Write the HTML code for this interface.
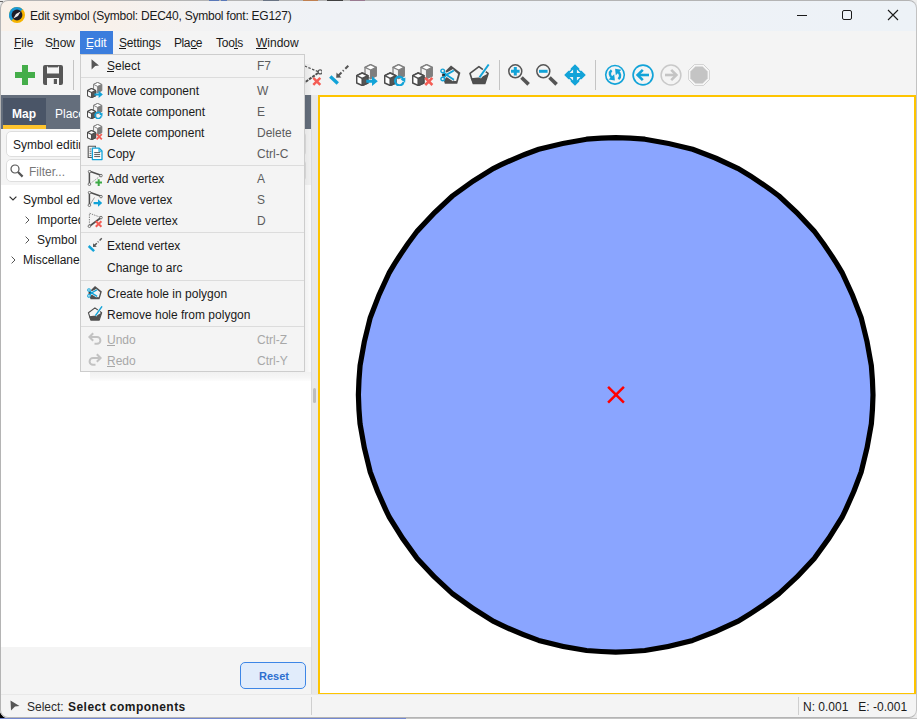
<!DOCTYPE html>
<html><head><meta charset="utf-8">
<style>
*{box-sizing:border-box;margin:0;padding:0}
html,body{width:917px;height:719px;overflow:hidden;background:#ececec;font-family:"Liberation Sans",sans-serif;font-size:12px;color:#1a1a1a}
.a{position:absolute}
svg.a{overflow:visible}
#win{position:absolute;left:0;top:0;width:917px;height:718px;background:#f4f4f4;border-radius:8px;overflow:hidden}
#wborder{position:absolute;left:0;top:0;width:917px;height:718px;border:1px solid #b4b4b4;border-right-color:#c2c2c2;border-radius:8px;pointer-events:none}
#title{position:absolute;left:0;top:0;width:917px;height:31px;background:linear-gradient(90deg,#f9f1e9 0%,#f8f1eb 12%,#f2f2f3 22%,#eff2f6 35%,#edf2f7 100%)}
.t{position:absolute;white-space:nowrap;line-height:12px;height:12px}
.ul{position:absolute;height:1px;background:#1a1a1a}
#menubar .t{top:37px}
#tabbar{left:1px;top:95px;width:310px;height:34px;background:#646e7c}
#maptab{left:3px;top:98px;width:43px;height:27px;background:#4a5567}
#mapline{left:3px;top:125px;width:43px;height:4px;background:#fec42e}
#splitter{left:311px;top:95px;width:7px;height:599px;background:#e8e8e8;border-left:1px solid #dcdcdc}
#map{left:318px;top:95px;width:598px;height:600px;border:2px solid #fec400;background:#fff}
#tree{left:1px;top:185px;width:310px;height:462px;background:#fff}
#status{left:0;top:694px;width:917px;height:24px;border-top:1px solid #e8e8e8;background:#f4f4f4}
#menu{left:80px;top:54px;width:225px;height:318px;background:#f4f4f4;border:1px solid #cdcdcd;}
#menu .t{left:26px}
#menu .k{left:176px;color:#5c5c5c}
#menu svg{position:absolute;left:6px;width:16px;height:16px}
.tb{position:absolute;top:64px;width:22px;height:22px}
.sep{position:absolute;left:0;width:223px;height:1px;background:#dcdcdc}
.dis,#menu .dis{color:#a8a8a8}
</style></head><body>
<svg width="0" height="0" style="position:absolute">
<defs>
  <symbol id="cubes" viewBox="0 0 22 22">
    <g stroke-linejoin="round" stroke-width="1.3">
      <path d="M14.6 0.6L20.2 3.3V11.8L14.6 14.5L9 11.8V3.3Z" fill="#f2f2f2" stroke="#808080"/>
      <path d="M14.6 6V14.5L20.2 11.8V3.3Z" fill="#7e7e7e" stroke="#808080"/>
      <path d="M9 3.3L14.6 6L20.2 3.3L14.6 0.6Z" fill="#fff" stroke="#808080"/>
      <path d="M6.2 9L11.8 11.7V19L6.2 21.5L0.7 19V11.7Z" fill="#fff" stroke="#4d4d4d" stroke-width="1.5"/>
      <path d="M6.2 14.4V21.5L11.8 19V11.7Z" fill="#555" stroke="#4d4d4d" stroke-width="1.5"/>
      <path d="M0.7 11.7L6.2 14.4L11.8 11.7L6.2 9Z" fill="#fff" stroke="#4d4d4d" stroke-width="1.5"/>
    </g>
  </symbol>
  <symbol id="i-move" viewBox="0 0 22 22">
    <use href="#cubes"/>
    <path d="M10.3 15.7H16V12.2L21.8 17.2L16 22V18.7H10.3Z" fill="#12a3d8"/>
  </symbol>
  <symbol id="i-rot" viewBox="0 0 22 22">
    <use href="#cubes"/>
    <path d="M19.3 15.2A4.3 4.3 0 1 0 19.6 18" fill="none" stroke="#12a3d8" stroke-width="2.2"/>
    <path d="M16.6 15.6L21.4 13.4L21.2 18.4Z" fill="#12a3d8"/>
  </symbol>
  <symbol id="i-del" viewBox="0 0 22 22">
    <use href="#cubes"/>
    <path d="M13.2 13.8L20.4 21M20.4 13.8L13.2 21" stroke="#f45d55" stroke-width="2.5"/>
  </symbol>
  <symbol id="i-extend" viewBox="0 0 22 22">
    <path d="M2.3 12.4L9.8 19.4" stroke="#12a3d8" stroke-width="3.4"/>
    <path d="M20.3 1.7L17.3 4.7M15.7 6.3L14.9 7.1M13.5 8.5L10.2 11.8" stroke="#555" stroke-width="2"/>
    <path d="M8.2 13.8L8.5 8.6L13.4 13.5Z" fill="#555"/>
  </symbol>
  <symbol id="i-hole" viewBox="0 0 22 22">
    <path d="M11 1.4L20.4 8.8L17.2 19.7H4.9L1.8 10.7Z" fill="#4f4f4f"/>
    <path d="M6.5 10.8L14 6.6L18.1 10L16.2 17H14.5Z" fill="#f4f4f4"/>
    <path d="M6.3 10.8L13.9 6.5M6.3 10.8L13.9 15.7M2.7 6.9L6.3 10.8L2.7 15" stroke="#f4f4f4" stroke-width="3.4"/>
    <path d="M6.3 10.8L13.9 6.5M6.3 10.8L13.9 15.7M3.5 7.8L6.3 10.8L3.5 14.1" stroke="#12a3d8" stroke-width="1.9"/>
    <circle cx="2.7" cy="6.9" r="1.8" fill="#f4f4f4" stroke="#12a3d8" stroke-width="1.4"/>
    <circle cx="2.7" cy="15" r="1.8" fill="#f4f4f4" stroke="#12a3d8" stroke-width="1.4"/>
  </symbol>
  <symbol id="i-unhole" viewBox="0 0 22 22">
    <path d="M10.9 2.6L20.1 9.4L16.8 19.4H5.3L2 9.4Z" fill="#f4f4f4" stroke="#4f4f4f" stroke-width="1.6" stroke-linejoin="round"/>
    <path d="M2.6 14.2L13 13.2L20.1 9.4L16.8 19.4H5.3Z" fill="#4f4f4f"/>
    <path d="M20.7 0.5L11.5 13.4" stroke="#f4f4f4" stroke-width="3.6"/>
    <path d="M20.7 0.5L11.5 13.4" stroke="#12a3d8" stroke-width="1.9"/>
  </symbol>
  <symbol id="i-zin" viewBox="0 0 22 22">
    <circle cx="7.3" cy="7.3" r="6.5" fill="none" stroke="#555" stroke-width="1.5"/>
    <path d="M13.5 13.5L20.6 20.4" stroke="#555" stroke-width="3.6"/>
    <path d="M7.3 3V11.6M3 7.3H11.6" stroke="#12a3d8" stroke-width="3"/>
  </symbol>
  <symbol id="i-zout" viewBox="0 0 22 22">
    <circle cx="7.3" cy="7.3" r="6.5" fill="none" stroke="#555" stroke-width="1.5"/>
    <path d="M13.5 13.5L20.6 20.4" stroke="#555" stroke-width="3.6"/>
    <path d="M3 7.3H11.6" stroke="#12a3d8" stroke-width="3"/>
  </symbol>
  <symbol id="i-pan" viewBox="0 0 22 22">
    <path d="M11 0.2L15.3 4.5V5.8L16.2 6.7H17.5L21.8 11L17.5 15.3H16.2L15.3 16.2V17.5L11 21.8L6.7 17.5V16.2L5.8 15.3H4.5L0.2 11L4.5 6.7H5.8L6.7 5.8V4.5Z" fill="#12a3d8"/>
    <path d="M9.1 5.6V9.1H5.6ZM12.9 5.6V9.1H16.4ZM9.1 16.4V12.9H5.6ZM12.9 16.4V12.9H16.4Z" fill="#f4f4f4"/>
  </symbol>
  <symbol id="i-refresh" viewBox="0 0 22 22">
    <circle cx="11" cy="10.8" r="9.3" fill="none" stroke="#12a3d8" stroke-width="1.6"/>
    <path d="M7.6 6.3C4.8 8.6 5.6 12.4 8.6 14" fill="none" stroke="#12a3d8" stroke-width="2.4"/>
    <path d="M10.9 16.6L4.6 15.6L10.2 10.2Z" fill="#12a3d8"/>
    <path d="M14.4 15.1C17.2 12.8 16.4 9 13.4 7.4" fill="none" stroke="#12a3d8" stroke-width="2.4"/>
    <path d="M11.1 4.8L17.4 5.8L11.8 11.2Z" fill="#12a3d8"/>
  </symbol>
  <symbol id="i-back" viewBox="0 0 22 22">
    <circle cx="11" cy="11" r="9.9" fill="none" stroke="#12a3d8" stroke-width="1.7"/>
    <path d="M17 11H7" stroke="#12a3d8" stroke-width="2.6"/>
    <path d="M10.8 5.8L5.6 11L10.8 16.2" fill="none" stroke="#12a3d8" stroke-width="2.6"/>
  </symbol>
  <symbol id="i-fwd" viewBox="0 0 22 22">
    <circle cx="11" cy="11" r="9.9" fill="none" stroke="#c9c9c9" stroke-width="1.5"/>
    <path d="M5 11H15" stroke="#c4c4c4" stroke-width="2.6"/>
    <path d="M11.2 5.8L16.4 11L11.2 16.2" fill="none" stroke="#c4c4c4" stroke-width="2.6"/>
  </symbol>
  <symbol id="i-stop" viewBox="0 0 22 22">
    <path d="M6.6 0.4H15.4L21.6 6.6V15.4L15.4 21.6H6.6L0.4 15.4V6.6Z" fill="#f6f6f6" stroke="#cdcdcd" stroke-width="0.9"/>
    <path d="M7.4 2.4H14.6L19.6 7.4V14.6L14.6 19.6H7.4L2.4 14.6V7.4Z" fill="#c4c4c4"/>
  </symbol>
  <symbol id="i-addv" viewBox="0 0 16 16">
    <path d="M2.6 1.3L14 5.3M2.4 2.2V13.6" stroke="#4f4f4f" stroke-width="1.5"/>
    <path d="M2.8 14L13.5 5.8" stroke="#777" stroke-width="0.8" stroke-dasharray="1.3 1"/>
    <circle cx="2.6" cy="1.6" r="1.3" fill="#f4f4f4" stroke="#666" stroke-width="0.9"/>
    <circle cx="14" cy="5.6" r="1.3" fill="#f4f4f4" stroke="#666" stroke-width="0.9"/>
    <circle cx="2.4" cy="14.2" r="1.3" fill="#f4f4f4" stroke="#666" stroke-width="0.9"/>
    <path d="M11.7 9.3V15.9M8.4 12.6H15" stroke="#3ba945" stroke-width="2"/>
  </symbol>
  <symbol id="i-movev" viewBox="0 0 16 16">
    <path d="M2.6 1.3L14 5.3M2.4 2.2V13.6" stroke="#4f4f4f" stroke-width="1.5"/>
    <path d="M2.8 14L7.5 6.5" stroke="#888" stroke-width="0.8"/>
    <circle cx="2.6" cy="1.6" r="1.3" fill="#f4f4f4" stroke="#666" stroke-width="0.9"/>
    <circle cx="14" cy="5.6" r="1.3" fill="#f4f4f4" stroke="#666" stroke-width="0.9"/>
    <circle cx="2.4" cy="14.2" r="1.3" fill="#f4f4f4" stroke="#666" stroke-width="0.9"/>
    <path d="M6.6 11H11V8.2L15.2 12L11 15.8V13.2H6.6Z" fill="#12a3d8"/>
  </symbol>
  <symbol id="i-delv" viewBox="0 0 16 16">
    <path d="M2.6 1.3L13.5 5.3M2.4 2.2V13.6" stroke="#777" stroke-width="0.9" stroke-dasharray="1.4 1"/>
    <path d="M2.8 14L13.5 6" stroke="#4f4f4f" stroke-width="1.6"/>
    <circle cx="14" cy="5.6" r="1.3" fill="#f4f4f4" stroke="#666" stroke-width="0.9"/>
    <circle cx="2.4" cy="14.2" r="1.3" fill="#f4f4f4" stroke="#666" stroke-width="0.9"/>
    <path d="M8.8 9.2L14.4 14.8M14.4 9.2L8.8 14.8" stroke="#f45d55" stroke-width="2"/>
  </symbol>
  <symbol id="i-copy" viewBox="0 0 16 16">
    <path d="M1.2 1.2H8.4V2.8M1.2 1.2V12.5H5" fill="none" stroke="#555" stroke-width="1.1"/>
    <path d="M2.6 4H4.4M2.6 6.2H4.4M2.6 8.4H4.4M2.6 10.6H4.4" stroke="#555" stroke-width="0.9"/>
    <path d="M5.4 3.2H12.2L15 6V14.6H5.4Z" fill="#fff" stroke="#12a3d8" stroke-width="1.3" stroke-linejoin="round"/>
    <path d="M12 3.4V6.2H14.8" fill="none" stroke="#12a3d8" stroke-width="1.1"/>
    <path d="M7.2 7.6H13.2M7.2 9.6H13.2M7.2 11.6H13.2" stroke="#555" stroke-width="1"/>
  </symbol>
  <symbol id="i-undo" viewBox="0 0 16 16">
    <path d="M3.5 6H10A3.4 3.4 0 0 1 10 12.8H7.5" fill="none" stroke="#c2c2c2" stroke-width="2"/>
    <path d="M6.2 2.2L2.4 6L6.2 9.8" fill="none" stroke="#c2c2c2" stroke-width="2"/>
  </symbol>
  <symbol id="i-redo" viewBox="0 0 16 16">
    <path d="M12.5 6H6A3.4 3.4 0 0 0 6 12.8H8.5" fill="none" stroke="#c2c2c2" stroke-width="2"/>
    <path d="M9.8 2.2L13.6 6L9.8 9.8" fill="none" stroke="#c2c2c2" stroke-width="2"/>
  </symbol>
</defs>
</svg>
<div class="a" style="left:0;top:700px;width:12px;height:19px;background:#000"></div>
<div class="a" style="left:0;top:718px;width:406px;height:1px;background:#7488d0"></div>
<div class="a" style="left:406px;top:718px;width:511px;height:1px;background:#c4c4c4"></div>
<div class="a" style="left:0;top:1px;width:3px;height:1px;background:#666"></div>
<div id="win">
  <div id="title">
    <svg class="a" style="left:9px;top:7px" width="16" height="16" viewBox="0 0 16 16">
      <circle cx="8" cy="8" r="8" fill="#f6b400"/>
      <path d="M8 0A8 8 0 0 0 2.34 13.66L13.66 2.34A8 8 0 0 0 8 0Z" fill="#1a9ad6"/>
      <circle cx="8" cy="8" r="5.4" fill="#1e1e28"/>
      <path d="M11.6 4.4L9 9L4.4 11.6L7 7Z" fill="#ececec"/>
    </svg>
    <div class="t" style="left:30px;top:10px;letter-spacing:-0.24px">Edit symbol (Symbol: DEC40, Symbol font: EG127)</div>
    <div class="a" style="left:797px;top:15px;width:10px;height:1px;background:#1a1a1a"></div>
    <div class="a" style="left:842px;top:10px;width:10px;height:10px;border:1px solid #1a1a1a;border-radius:2px"></div>
    <svg class="a" style="left:887px;top:9px" width="12" height="12" viewBox="0 0 12 12"><path d="M1 1L11 11M11 1L1 11" stroke="#1a1a1a" stroke-width="1.1"/></svg>
  </div>

  <div id="menubar">
    <div class="a" style="left:80px;top:31px;width:33px;height:23px;background:#3b7ddd"></div>
    <div class="t" style="left:14px">File</div>
    <div class="ul" style="left:14px;top:48px;width:7px"></div>
    <div class="t" style="left:45px">Show</div>
    <div class="ul" style="left:52px;top:48px;width:7px"></div>
    <div class="t" style="left:86px;color:#fff">Edit</div>
    <div class="ul" style="left:86px;top:48px;width:7px;background:#fff"></div>
    <div class="t" style="left:119px;letter-spacing:-0.2px">Settings</div>
    <div class="ul" style="left:119px;top:48px;width:7px"></div>
    <div class="t" style="left:174px;letter-spacing:-0.4px">Place</div>
    <div class="ul" style="left:191px;top:48px;width:6px"></div>
    <div class="t" style="left:216px;letter-spacing:-0.2px">Tools</div>
    <div class="ul" style="left:234px;top:48px;width:4px"></div>
    <div class="t" style="left:256px">Window</div>
    <div class="ul" style="left:256px;top:48px;width:11px"></div>
  </div>

  <div id="toolbar">
    <svg class="a" style="left:15px;top:65px" width="20" height="20" viewBox="0 0 20 20"><path d="M7 0H13V7H20V13H13V20H7V13H0V7H7Z" fill="#44ad4a"/></svg>
    <svg class="a" style="left:43px;top:65px" width="20" height="20" viewBox="0 0 20 20"><path d="M2 0H18A2 2 0 0 1 20 2V18A2 2 0 0 1 18 20H2A2 2 0 0 1 0 18V2A2 2 0 0 1 2 0Z M4 1.5V8.5H16V1.5Z M4 13V20H16V13Z" fill="#575757" fill-rule="evenodd"/><rect x="10.8" y="14" width="3.2" height="5" fill="#575757"/><rect x="5" y="1" width="10" height="1.4" fill="#575757"/></svg>
    <div class="a" style="left:73px;top:60px;width:1px;height:30px;background:#c4c4c4"></div>
    <svg class="tb" style="left:300px"><path d="M1 0.5L18.5 7.8" stroke="#555" stroke-width="1.2" stroke-dasharray="2.5 1.5"/><path d="M18 9L4 19" stroke="#4f4f4f" stroke-width="2" stroke-dasharray="3 1"/><circle cx="20.2" cy="7.9" r="2" fill="#f4f4f4" stroke="#555" stroke-width="1.1"/><path d="M13.3 13.9L20.3 20.9M20.3 13.9L13.3 20.9" stroke="#f45d55" stroke-width="2.5"/></svg>
    <svg class="tb" style="left:328px"><use href="#i-extend"/></svg>
    <svg class="tb" style="left:356px"><use href="#i-move"/></svg>
    <svg class="tb" style="left:384px"><use href="#i-rot"/></svg>
    <svg class="tb" style="left:412px"><use href="#i-del"/></svg>
    <svg class="tb" style="left:440px"><use href="#i-hole"/></svg>
    <svg class="tb" style="left:468px"><use href="#i-unhole"/></svg>
    <div class="a" style="left:499px;top:60px;width:1px;height:30px;background:#c4c4c4"></div>
    <svg class="tb" style="left:508px"><use href="#i-zin"/></svg>
    <svg class="tb" style="left:536px"><use href="#i-zout"/></svg>
    <svg class="tb" style="left:564px"><use href="#i-pan"/></svg>
    <div class="a" style="left:595px;top:60px;width:1px;height:30px;background:#c4c4c4"></div>
    <svg class="tb" style="left:604px"><use href="#i-refresh"/></svg>
    <svg class="tb" style="left:632px"><use href="#i-back"/></svg>
    <svg class="tb" style="left:660px"><use href="#i-fwd"/></svg>
    <svg class="tb" style="left:688px"><use href="#i-stop"/></svg>
  </div>

  <div class="a" id="tabbar"></div>
  <div class="a" id="maptab"></div>
  <div class="a" id="mapline"></div>
  <div class="t" style="left:12px;top:108px;color:#fff;font-weight:bold">Map</div>
  <div class="t" style="left:55px;top:108px;color:#fff">Place</div>

  <div class="a" style="left:6px;top:131px;width:300px;height:26px;background:#fff;border:1px solid #dedede;border-radius:5px"></div>
  <div class="t" style="left:13px;top:139px">Symbol editing</div>
  <div class="a" style="left:6px;top:159px;width:300px;height:23px;background:#fff;border:1px solid #dedede;border-radius:5px"></div>
  <svg class="a" style="left:10px;top:164px" width="14" height="14" viewBox="0 0 14 14"><circle cx="5" cy="5" r="4" fill="none" stroke="#555" stroke-width="1.2"/><path d="M8 8L12.6 12.6" stroke="#555" stroke-width="2.2"/></svg>
  <div class="t" style="left:29px;top:166px;color:#777">Filter...</div>

  <div class="a" id="tree"></div>
  <svg class="a" style="left:9px;top:196px" width="8" height="5" viewBox="0 0 8 5"><path d="M0.6 0.6L4 4L7.4 0.6" fill="none" stroke="#333" stroke-width="1.2"/></svg>
  <div class="t" style="left:23px;top:194px">Symbol editing</div>
  <svg class="a" style="left:25px;top:216px" width="5" height="8" viewBox="0 0 5 8"><path d="M0.6 0.6L4 4L0.6 7.4" fill="none" stroke="#555" stroke-width="1"/></svg>
  <div class="t" style="left:37px;top:214px">Imported</div>
  <svg class="a" style="left:25px;top:236px" width="5" height="8" viewBox="0 0 5 8"><path d="M0.6 0.6L4 4L0.6 7.4" fill="none" stroke="#555" stroke-width="1"/></svg>
  <div class="t" style="left:37px;top:234px">Symbol</div>
  <svg class="a" style="left:11px;top:256px" width="5" height="8" viewBox="0 0 5 8"><path d="M0.6 0.6L4 4L0.6 7.4" fill="none" stroke="#555" stroke-width="1"/></svg>
  <div class="t" style="left:23px;top:254px">Miscellaneous</div>

  <div class="a" style="left:240px;top:662px;width:66px;height:27px;background:#e1ecfb;border:1px solid #3d86e6;border-radius:5px"></div>
  <div class="t" style="left:259px;top:670px;color:#2d6fcf;font-size:11px;font-weight:bold">Reset</div>

  <div class="a" id="splitter"></div>
  <div class="a" style="left:313px;top:388px;width:3px;height:15px;background:#bdbdbd;border-radius:1.5px"></div>
  <div class="a" id="map">
    <svg class="a" style="left:0;top:0" width="594" height="596" viewBox="320 97 594 596">
      <path d="M615.70 137.55A386.0 386.0 0 0 1 644.83 139.20A386.0 386.0 0 0 1 692.64 149.32A386.0 386.0 0 0 1 737.68 168.30A386.0 386.0 0 0 1 779.02 196.03A386.0 386.0 0 0 1 814.52 231.53A386.0 386.0 0 0 1 842.25 272.87A386.0 386.0 0 0 1 861.23 317.91A386.0 386.0 0 0 1 871.35 365.72A386.0 386.0 0 0 1 873.00 394.85A386.0 386.0 0 0 1 871.35 423.98A386.0 386.0 0 0 1 861.23 471.79A386.0 386.0 0 0 1 842.25 516.83A386.0 386.0 0 0 1 814.52 558.17A386.0 386.0 0 0 1 779.02 593.67A386.0 386.0 0 0 1 737.68 621.40A386.0 386.0 0 0 1 692.64 640.38A386.0 386.0 0 0 1 644.83 650.50A386.0 386.0 0 0 1 615.70 652.15A386.0 386.0 0 0 1 586.57 650.50A386.0 386.0 0 0 1 538.76 640.38A386.0 386.0 0 0 1 493.72 621.40A386.0 386.0 0 0 1 452.38 593.67A386.0 386.0 0 0 1 416.88 558.17A386.0 386.0 0 0 1 389.15 516.83A386.0 386.0 0 0 1 370.17 471.79A386.0 386.0 0 0 1 360.05 423.98A386.0 386.0 0 0 1 358.40 394.85A386.0 386.0 0 0 1 360.05 365.72A386.0 386.0 0 0 1 370.17 317.91A386.0 386.0 0 0 1 389.15 272.87A386.0 386.0 0 0 1 416.88 231.53A386.0 386.0 0 0 1 452.38 196.03A386.0 386.0 0 0 1 493.72 168.30A386.0 386.0 0 0 1 538.76 149.32A386.0 386.0 0 0 1 586.57 139.20A386.0 386.0 0 0 1 615.70 137.55Z" fill="#8aa5ff" stroke="#000" stroke-width="5.2" stroke-linejoin="miter"/>
      <path d="M608.1 386.8L623.9 402.7M623.9 386.8L608.1 402.7" stroke="#f00" stroke-width="2.5"/>
    </svg>
  </div>

  <div class="a" id="status">
    <div class="a" style="left:311px;top:2px;width:1px;height:18px;background:#cfcfcf"></div>
    <div class="a" style="left:798px;top:2px;width:1px;height:18px;background:#cfcfcf"></div>
  </div>
  <svg class="a" style="left:10px;top:700px" width="10" height="11" viewBox="0 0 10 11"><path d="M0.5 0.5L9.5 6L5 6.5L1 10.5Z" fill="#555"/></svg>
  <div class="t" style="left:27px;top:701px;color:#2a2a2a">Select: <b style="letter-spacing:0.45px;margin-left:1px;color:#1a1a1a">Select components</b></div>
  <div class="t" style="left:803px;top:701px">N: 0.001&nbsp;&nbsp; E: -0.001</div>

  <div class="a" style="left:305px;top:64px;width:6px;height:308px;background:linear-gradient(90deg,rgba(0,0,0,0.055),rgba(0,0,0,0.015))"></div>
  <div class="a" style="left:90px;top:372px;width:221px;height:9px;background:linear-gradient(180deg,rgba(0,0,0,0.055),rgba(0,0,0,0.035) 60%,rgba(0,0,0,0.01))"></div>
  <div class="a" id="menu">
    <svg style="top:4px;left:10px;width:8px;height:11px" viewBox="0 0 8 11"><path d="M0.5 0.3L8 6.6L4.2 6.9L0.6 10.6Z" fill="#555"/></svg>
    <div class="t" style="top:5px">Select</div><div class="t k" style="top:5px">F7</div>
    <div class="ul" style="left:26px;top:16px;width:7px"></div>
    <div class="sep" style="top:22px"></div>
    <svg style="top:27px" viewBox="0 0 22 22"><use href="#i-move"/></svg>
    <div class="t" style="top:30px">Move component</div><div class="t k" style="top:30px">W</div>
    <svg style="top:48px" viewBox="0 0 22 22"><use href="#i-rot"/></svg>
    <div class="t" style="top:51px">Rotate component</div><div class="t k" style="top:51px">E</div>
    <svg style="top:69px" viewBox="0 0 22 22"><use href="#i-del"/></svg>
    <div class="t" style="top:72px">Delete component</div><div class="t k" style="top:72px">Delete</div>
    <svg style="top:90px" viewBox="0 0 16 16"><use href="#i-copy"/></svg>
    <div class="t" style="top:93px">Copy</div><div class="t k" style="top:93px">Ctrl-C</div>
    <div class="sep" style="top:110px"></div>
    <svg style="top:115px" viewBox="0 0 16 16"><use href="#i-addv"/></svg>
    <div class="t" style="top:118px">Add vertex</div><div class="t k" style="top:118px">A</div>
    <svg style="top:136px" viewBox="0 0 16 16"><use href="#i-movev"/></svg>
    <div class="t" style="top:139px">Move vertex</div><div class="t k" style="top:139px">S</div>
    <svg style="top:157px" viewBox="0 0 16 16"><use href="#i-delv"/></svg>
    <div class="t" style="top:160px">Delete vertex</div><div class="t k" style="top:160px">D</div>
    <div class="sep" style="top:177px"></div>
    <svg style="top:182px" viewBox="0 0 22 22"><use href="#i-extend"/></svg>
    <div class="t" style="top:185px">Extend vertex</div>
    <div class="t" style="top:207px">Change to arc</div>
    <div class="sep" style="top:225px"></div>
    <svg style="top:230px" viewBox="0 0 22 22"><use href="#i-hole"/></svg>
    <div class="t" style="top:233px">Create hole in polygon</div>
    <svg style="top:251px" viewBox="0 0 22 22"><use href="#i-unhole"/></svg>
    <div class="t" style="top:254px">Remove hole from polygon</div>
    <div class="sep" style="top:271px"></div>
    <svg style="top:276px" viewBox="0 0 16 16"><use href="#i-undo"/></svg>
    <div class="t dis" style="top:279px">Undo</div><div class="t k dis" style="top:279px">Ctrl-Z</div>
    <div class="ul" style="left:26px;top:290px;width:8px;background:#a8a8a8"></div>
    <svg style="top:297px" viewBox="0 0 16 16"><use href="#i-redo"/></svg>
    <div class="t dis" style="top:300px">Redo</div><div class="t k dis" style="top:300px">Ctrl-Y</div>
    <div class="ul" style="left:26px;top:311px;width:8px;background:#a8a8a8"></div>
  </div>
</div>
<div id="wborder"></div>
<div class="a" style="left:209px;top:0;width:10px;height:1px;background:#5a78b8;z-index:5"></div>
<div class="a" style="left:221px;top:0;width:6px;height:1px;background:#5a78b8;z-index:5"></div>
<div class="a" style="left:263px;top:0;width:16px;height:1px;background:#6a7484;z-index:5"></div>
<div class="a" style="left:303px;top:0;width:15px;height:1px;background:#c08050;z-index:5"></div>
<div class="a" style="left:327px;top:0;width:16px;height:1px;background:#404040;z-index:5"></div>
<div class="a" style="left:350px;top:0;width:15px;height:1px;background:#9a7a90;z-index:5"></div>

</body></html>
